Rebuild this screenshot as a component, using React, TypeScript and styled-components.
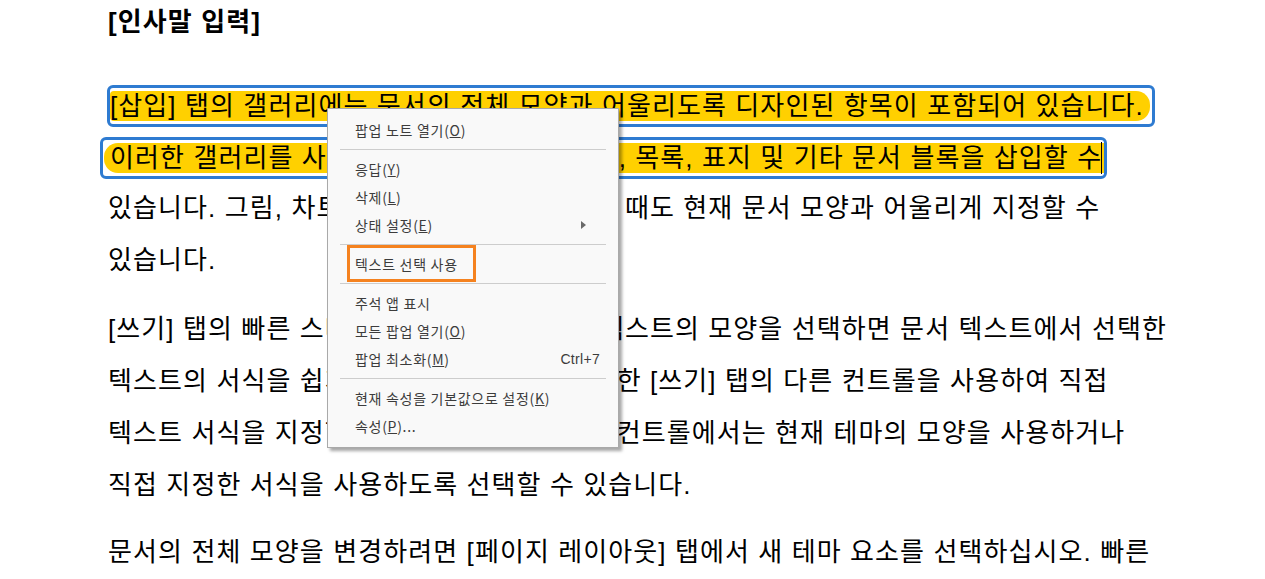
import React from 'react';
import styled, { createGlobalStyle } from 'styled-components';

const BLUE = '#2e7bd1';
const YELLOW = '#ffd000';

const GlobalStyle = createGlobalStyle`
  html, body {
    margin: 0;
    padding: 0;
    background: #ffffff;
  }
  body {
    font-family: 'Liberation Sans', 'Noto Sans CJK KR', sans-serif;
    color: #000;
  }
`;

const Page = styled.div`
  position: relative;
  width: 1265px;
  height: 579px;
  overflow: hidden;
  padding-left: 108px;
  box-sizing: border-box;
`;

const Heading = styled.div`
  font-size: 26px;
  font-weight: 700;
  letter-spacing: 1.1px;
  line-height: 44px;
  height: 44px;
  white-space: nowrap;
`;

const Paragraph = styled.div<{ $gap: number }>`
  margin-top: ${(p) => p.$gap}px;
  font-size: 26px;
  letter-spacing: 1.1px;
`;

const Line = styled.div`
  display: flex;
  align-items: flex-start;
  height: 52px;
  line-height: 52px;
  white-space: nowrap;
`;

const Selection = styled.span<{ $shift: number; $padL: number; $padR: number }>`
  display: inline-flex;
  align-items: center;
  box-sizing: border-box;
  height: 42px;
  margin-top: 7px;
  margin-left: ${(p) => p.$shift}px;
  padding: 0 ${(p) => p.$padR}px 0 ${(p) => p.$padL}px;
  border: 3px solid ${BLUE};
  border-radius: 6px;
`;

const Highlight = styled.span<{ $left: number; $right: number; $padL: number; $padR: number }>`
  display: inline-flex;
  align-items: center;
  height: 30px;
  line-height: 30px;
  background: ${YELLOW};
  padding: 0 ${(p) => p.$padR}px 0 ${(p) => p.$padL}px;
  border-radius: ${(p) => `${p.$left}px ${p.$right}px ${p.$right}px ${p.$left}px`};
`;

const Caret = styled.span`
  display: inline-block;
  width: 1px;
  height: 32px;
  margin-left: -1px;
  background: #000;
`;

/* context menu lies over the document */
const Menu = styled.div`
  position: absolute;
  left: 327px;
  top: 108px;
  width: 292px;
  box-sizing: border-box;
  padding: 7px 0 7px;
  background: #f9f9f9;
  border: 1px solid #a9a9a9;
  box-shadow: 3px 3px 3px rgba(0, 0, 0, 0.35);
  font-family: 'Noto Sans CJK KR', 'Liberation Sans', sans-serif;
  font-size: 14px;
  letter-spacing: 0.7px;
  color: #3c3c3c;
`;

const Item = styled.div`
  position: relative;
  display: flex;
  align-items: center;
  justify-content: space-between;
  height: 28px;
  padding: 0 18px 0 27px;
  white-space: nowrap;
`;

const Shortcut = styled.span`
  font-family: 'Liberation Sans', sans-serif;
  font-size: 14px;
  letter-spacing: 0.3px;
  color: #3c3c3c;
`;

const Arrow = styled.span`
  width: 0;
  height: 0;
  margin-right: 14px;
  border-top: 4px solid transparent;
  border-bottom: 4px solid transparent;
  border-left: 5px solid #6a6a6a;
`;

const Separator = styled.div`
  height: 11px;
  display: flex;
  align-items: center;
  padding: 0 12px;
  &::after {
    content: '';
    flex: 1;
    height: 1px;
    background: #cdcdcd;
  }
`;

/* annotation outline drawn over the menu item */
const Callout = styled.span`
  position: absolute;
  left: 19px;
  top: -5px;
  width: 129px;
  height: 37px;
  box-sizing: border-box;
  border: 3px solid #f5821f;
`;

type MenuEntry =
  | { kind: 'sep' }
  | { kind: 'item'; label: string; key?: string; tail?: string; shortcut?: string; sub?: boolean; marked?: boolean };

const menu: MenuEntry[] = [
  { kind: 'item', label: '팝업 노트 열기', key: 'O' },
  { kind: 'sep' },
  { kind: 'item', label: '응답', key: 'Y' },
  { kind: 'item', label: '삭제', key: 'L' },
  { kind: 'item', label: '상태 설정', key: 'E', sub: true },
  { kind: 'sep' },
  { kind: 'item', label: '텍스트 선택 사용', marked: true },
  { kind: 'sep' },
  { kind: 'item', label: '주석 앱 표시' },
  { kind: 'item', label: '모든 팝업 열기', key: 'O' },
  { kind: 'item', label: '팝업 최소화', key: 'M', shortcut: 'Ctrl+7' },
  { kind: 'sep' },
  { kind: 'item', label: '현재 속성을 기본값으로 설정', key: 'K' },
  { kind: 'item', label: '속성', key: 'P', tail: '...' },
];

const para2 = [
  '[쓰기] 탭의 빠른 스타일 갤러리에서 원하는 텍스트의 모양을 선택하면 문서 텍스트에서 선택한',
  '텍스트의 서식을 쉽게 변경할 수 있습니다. 또한 [쓰기] 탭의 다른 컨트롤을 사용하여 직접',
  '텍스트 서식을 지정할 수 있습니다. 대부분의 컨트롤에서는 현재 테마의 모양을 사용하거나',
  '직접 지정한 서식을 사용하도록 선택할 수 있습니다.',
];

const ContextMenu: React.FC = () => (
  <Menu>
    {menu.map((m, i) =>
      m.kind === 'sep' ? (
        <Separator key={i} />
      ) : (
        <Item key={i}>
          <span>
            {m.label}
            {m.key && (
              <>
                (<u>{m.key}</u>)
              </>
            )}
            {m.tail}
          </span>
          {m.shortcut && <Shortcut>{m.shortcut}</Shortcut>}
          {m.sub && <Arrow />}
          {m.marked && <Callout />}
        </Item>
      )
    )}
  </Menu>
);

const App: React.FC = () => (
  <Page>
    <GlobalStyle />
    <Heading>[인사말 입력]</Heading>
    <Paragraph $gap={34}>
      <Line>
        <Selection $shift={-1} $padL={0} $padR={2}>
          <Highlight $left={4} $right={14} $padL={0} $padR={6}>
            [삽입] 탭의 갤러리에는 문서의 전체 모양과 어울리도록 디자인된 항목이 포함되어 있습니다.
          </Highlight>
        </Selection>
      </Line>
      <Line>
        <Selection $shift={-8} $padL={1} $padR={0}>
          <Highlight $left={14} $right={0} $padL={6} $padR={2}>
            이러한 갤러리를 사용하여 표, 머리글, 바닥글, 목록, 표지 및 기타 문서 블록을 삽입할 수
            <Caret />
          </Highlight>
        </Selection>
      </Line>
      <Line>있습니다. 그림, 차트 또는 다이어그램을 만들 때도 현재 문서 모양과 어울리게 지정할 수</Line>
      <Line>있습니다.</Line>
    </Paragraph>
    <Paragraph $gap={17}>
      {para2.map((t) => (
        <Line key={t}>{t}</Line>
      ))}
    </Paragraph>
    <Paragraph $gap={15}>
      <Line>문서의 전체 모양을 변경하려면 [페이지 레이아웃] 탭에서 새 테마 요소를 선택하십시오. 빠른</Line>
    </Paragraph>
    <ContextMenu />
  </Page>
);

export default App;
